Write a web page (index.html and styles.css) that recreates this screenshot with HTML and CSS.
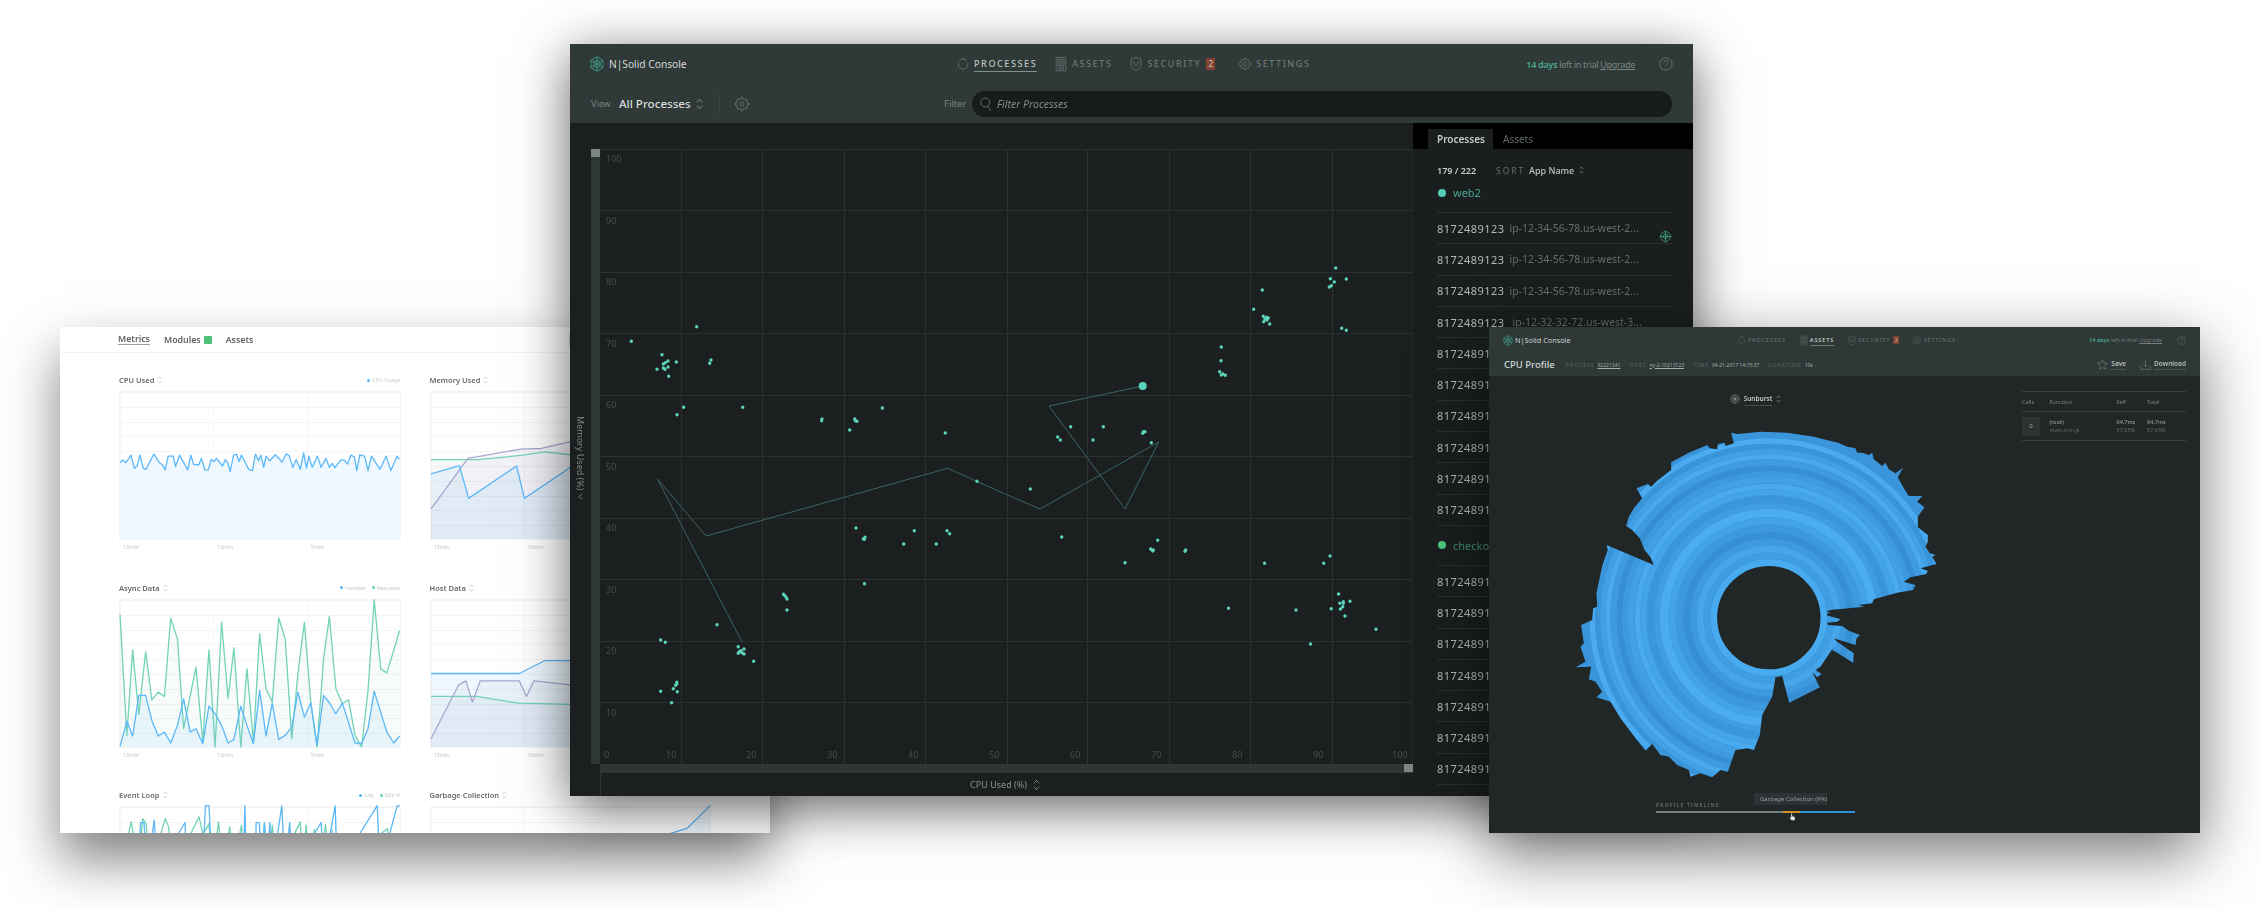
FILE: index.html
```html
<!DOCTYPE html>
<html lang="en">
<head>
<meta charset="utf-8">
<title>N|Solid Console</title>
<link rel="stylesheet" href="styles.css">
</head>
<body>
<svg class="defs" width="0" height="0" aria-hidden="true">
  <symbol id="i-logo" viewBox="0 0 24 28"><path d="M12 1.500 22.500 7.500V20.500L12 26.500 1.500 20.500V7.500ZM12 1.500V26.500M1.500 7.500 22.500 20.500M22.500 7.500 1.500 20.500M12 7.500 17.500 10.700V17.300L12 20.500 6.500 17.300V10.700Z"/></symbol>
  <symbol id="i-proc" viewBox="0 0 16 20"><circle cx="8" cy="10" r="6.500" stroke-dasharray="9 1.500 12 1.500 12 2"/><path d="M8 1v2M8 17v2"/></symbol>
  <symbol id="i-assets" viewBox="0 0 16 20"><rect x="1.500" y="1" width="13" height="18" rx="1"/><rect x="4" y="3.500" width="8" height="8"/><circle cx="8" cy="7.500" r="2"/><path d="M4 14h8M4 16.500h8"/></symbol>
  <symbol id="i-shield" viewBox="0 0 16 20"><path d="M8 1l6.500 2.500v7c0 4-3 6.500-6.500 8.500-3.500-2-6.500-4.500-6.500-8.500v-7z"/><path d="M5 6l1 5 2 2 2-2 1-5"/></symbol>
  <symbol id="i-gear" viewBox="-.5 .4 17 17"><path d="M6.800 1h2.400l.4 2 1.400.6 1.700-1.100 1.700 1.700-1.100 1.700.6 1.400 2 .4v2.400l-2 .4-.6 1.400 1.100 1.700-1.700 1.700-1.700-1.100-1.400.6-.4 2H6.800l-.4-2-1.400-.6-1.700 1.100-1.700-1.700 1.100-1.700-.6-1.400-2-.4V7.700l2-.4.6-1.400-1.100-1.700 1.700-1.700 1.700 1.100 1.400-.6z"/><circle cx="8" cy="8.900" r="2.500"/></symbol>
  <symbol id="i-search" viewBox="0 0 16 20"><circle cx="7" cy="8" r="6"/><path d="M10.500 13l4 6"/></symbol>
  <symbol id="i-updown" viewBox="0 0 8 14"><path d="M1 5l3-3.500L7 5M1 9l3 3.500L7 9"/></symbol>
  <symbol id="i-help" viewBox="0 0 16 16"><circle cx="8" cy="8" r="7"/><path d="M5.800 6.200c0-3 4.400-3 4.400-.2 0 1.800-2.200 1.800-2.200 3.800M8 11.200v1.200"/></symbol>
  <symbol id="i-target" viewBox="0 0 16 16"><circle cx="8" cy="8" r="6"/><circle cx="8" cy="8" r="2.800"/><path d="M8 .5v15M.5 8h15"/></symbol>
  <symbol id="i-star" viewBox="0 0 16 16"><path d="M8 1l2.200 4.700 5.100.6-3.800 3.500 1 5.100L8 12.400l-4.500 2.500 1-5.100L.7 6.300l5.100-.6z"/></symbol>
  <symbol id="i-down" viewBox="0 0 16 16"><path d="M8 1v10M5 8l3 3 3-3M1 10v5h14v-5"/></symbol>
  <symbol id="i-sun" viewBox="0 0 16 16"><circle cx="8" cy="8" r="6.500"/><circle cx="8" cy="8" r="2"/><path d="M8 .5V15.500M.5 8H15.500M3 3l10 10M13 3 3 13"/></symbol>
</svg>

<section class="window light">
  <nav class="light-nav">
    <a class="current">Metrics</a>
    <a>Modules<i class="ok"></i></a>
    <a>Assets</a>
    <span class="light-extra"><i class="light-box"></i>Ne</span>
  </nav>
  <div class="charts">
    <article class="chart">
      <header class="chart-head"><h3>CPU Used<svg class="ud"><use href="#i-updown"/></svg></h3><p class="legend"><i class="c-blue"></i>CPU Usage</p></header>
      <div class="plot"><svg viewBox="230 244 817 445" preserveAspectRatio="none">
        <polygon class="area-blue" points="230,689 230,458 238,450 247,458 262,435 272,475 280,468 288,435 298,475 306,478 329,432 345,458 355,465 362,480 371,438 386,438 392,470 404,435 428,480 437,435 445,463 460,465 468,445 478,480 488,480 497,448 505,455 512,445 530,468 538,448 546,460 552,485 562,435 571,432 578,455 585,435 606,478 617,482 626,432 635,452 642,435 650,472 657,438 668,452 684,434 704,456 716,431 725,438 735,472 745,448 757,478 767,428 775,475 782,438 792,472 807,438 818,472 832,445 842,472 850,460 858,473 875,450 885,450 895,462 905,435 915,440 922,482 931,434 945,438 955,482 965,438 990,478 1008,438 1022,482 1040,438 1047,448 1047,689"/>
        <polyline class="ln-blue" points="230,458 238,450 247,458 262,435 272,475 280,468 288,435 298,475 306,478 329,432 345,458 355,465 362,480 371,438 386,438 392,470 404,435 428,480 437,435 445,463 460,465 468,445 478,480 488,480 497,448 505,455 512,445 530,468 538,448 546,460 552,485 562,435 571,432 578,455 585,435 606,478 617,482 626,432 635,452 642,435 650,472 657,438 668,452 684,434 704,456 716,431 725,438 735,472 745,448 757,478 767,428 775,475 782,438 792,472 807,438 818,472 832,445 842,472 850,460 858,473 875,450 885,450 895,462 905,435 915,440 922,482 931,434 945,438 955,482 965,438 990,478 1008,438 1022,482 1040,438 1047,448"/>
      </svg></div>
      <p class="times"><span>15min</span><span>10min</span><span>5min</span></p>
    </article>
    <article class="chart">
      <header class="chart-head"><h3>Memory Used<svg class="ud"><use href="#i-updown"/></svg></h3></header>
      <div class="plot"><svg viewBox="1132 244 817 445" preserveAspectRatio="none">
        <polygon class="area-gray" points="1132,689 1132,598 1240,445 1395,417 1455,415 1540,394 1949,340 1949,689"/>
        <polygon class="area-gray" points="1132,689 1132,449 1270,449 1395,436 1465,425 1540,434 1949,430 1949,689"/>
        <polygon class="area-soft" points="1132,689 1132,492 1215,467 1242,566 1382,468 1405,566 1540,472 1949,400 1949,689"/>
        <polyline class="ln-green" points="1132,449 1270,449 1395,436 1465,425 1540,434 1949,430"/>
        <polyline class="ln-purple" points="1132,598 1240,445 1395,417 1455,415 1540,394 1949,340"/>
        <polyline class="ln-blue" points="1132,492 1215,467 1242,566 1382,468 1405,566 1540,472 1949,400"/>
      </svg></div>
      <p class="times"><span>15min</span><span>10min</span><span>5min</span></p>
    </article>
    <article class="chart">
      <header class="chart-head"><h3>Async Data<svg class="ud"><use href="#i-updown"/></svg></h3><p class="legend"><i class="c-blue"></i>Handles<i class="c-green"></i>Requests</p></header>
      <div class="plot"><svg viewBox="230 88 817 442" preserveAspectRatio="none">
        <polygon class="area-soft" points="230,530 230,528 250,452 267,497 285,375 305,375 323,450 342,497 360,485 378,518 398,465 416,385 435,485 452,475 472,520 490,407 508,430 527,465 546,518 563,507 583,407 601,465 620,520 638,360 657,497 675,398 694,507 713,495 732,470 750,365 769,440 788,397 806,525 825,375 842,397 861,430 880,398 917,518 936,520 955,475 973,362 992,425 1010,485 1030,518 1047,497 1047,530"/>
        <polygon class="area-faint" points="230,530 230,132 250,495 267,238 285,432 305,243 323,388 342,365 360,378 378,142 398,205 416,475 452,290 472,515 490,238 508,530 527,155 546,385 563,232 583,530 601,295 620,515 638,190 657,355 675,395 694,142 713,205 732,505 750,310 769,155 788,400 806,530 825,265 842,137 861,355 880,400 898,388 917,495 936,530 955,360 973,87 992,295 1010,307 1030,240 1047,180 1047,530"/>
        <polyline class="ln-green" points="230,132 250,495 267,238 285,432 305,243 323,388 342,365 360,378 378,142 398,205 416,475 452,290 472,515 490,238 508,530 527,155 546,385 563,232 583,530 601,295 620,515 638,190 657,355 675,395 694,142 713,205 732,505 750,310 769,155 788,400 806,530 825,265 842,137 861,355 880,400 898,388 917,495 936,530 955,360 973,87 992,295 1010,307 1030,240 1047,180"/>
        <polyline class="ln-blue" points="230,528 250,452 267,497 285,375 305,375 323,450 342,497 360,485 378,518 398,465 416,385 435,485 452,475 472,520 490,407 508,430 527,465 546,518 563,507 583,407 601,465 620,520 638,360 657,497 675,398 694,507 713,495 732,470 750,365 769,440 788,397 806,525 825,375 842,397 861,430 880,398 917,518 936,520 955,475 973,362 992,425 1010,485 1030,518 1047,497"/>
      </svg></div>
      <p class="times"><span>15min</span><span>10min</span><span>5min</span></p>
    </article>
    <article class="chart">
      <header class="chart-head"><h3>Host Data<svg class="ud"><use href="#i-updown"/></svg></h3></header>
      <div class="plot"><svg viewBox="1132 88 817 442" preserveAspectRatio="none">
        <polygon class="area-gray" points="1132,530 1132,505 1213,343 1234,331 1253,395 1276,331 1390,331 1411,378 1433,331 1540,343 1949,370 1949,530"/>
        <polygon class="area-gray" points="1132,530 1132,378 1265,378 1385,398 1540,402 1949,405 1949,530"/>
        <polygon class="area-soft" points="1132,530 1132,309 1390,309 1465,270 1949,270 1949,530"/>
        <polyline class="ln-green" points="1132,378 1265,378 1385,398 1540,402 1949,405"/>
        <polyline class="ln-purple" points="1132,505 1213,343 1234,331 1253,395 1276,331 1390,331 1411,378 1433,331 1540,343 1949,370"/>
        <polyline class="ln-blue" points="1132,309 1390,309 1465,270 1949,270"/>
      </svg></div>
      <p class="times"><span>15min</span><span>10min</span><span>5min</span></p>
    </article>
    <article class="chart">
      <header class="chart-head"><h3>Event Loop<svg class="ud"><use href="#i-updown"/></svg></h3><p class="legend"><i class="c-blue"></i>Lag<i class="c-green"></i>Idle %</p></header>
      <div class="plot"><svg viewBox="230 710 817 445" preserveAspectRatio="none">
        <polyline class="ln-green" points="230,900 263,755 285,900 296,745 306,760 320,900 362,745 372,770 385,900 461,740 472,790 480,780 490,760 500,900 518,755 530,900 551,770 560,900 585,765 595,900 640,900 652,760 665,900 675,765 690,900 757,755 765,900 774,765 785,900 798,778 810,900 831,763 840,900 850,780 860,900 1012,775 1022,900"/>
        <polyline class="ln-blue" points="230,900 285,900 290,757 300,757 310,900 330,750 340,900 420,757 425,900 470,900 480,706 490,706 500,900 590,900 595,706 600,900 625,900 628,757 637,757 645,900 652,757 660,900 668,757 675,900 703,706 712,900 726,757 735,900 818,757 826,900 859,706 865,900 982,706 990,900 1040,707 1047,707"/>
      </svg></div>
    </article>
    <article class="chart">
      <header class="chart-head"><h3>Garbage Collection<svg class="ud"><use href="#i-updown"/></svg></h3></header>
      <div class="plot"><svg viewBox="1132 710 817 445" preserveAspectRatio="none">
        <polygon class="area-soft" points="1132,1155 1132,900 1600,900 1800,800 1880,775 1949,705 1949,1155"/>
        <polyline class="ln-blue" points="1132,900 1600,900 1800,800 1880,775 1949,705"/>
      </svg></div>
    </article>
  </div>
</section>

<section class="window main">
  <header class="bar">
    <div class="bar-top">
      <div class="brand"><svg class="logo"><use href="#i-logo"/></svg>N|Solid Console</div>
      <nav class="nav">
        <a class="nav-item active"><svg><use href="#i-proc"/></svg><span>PROCESSES</span></a>
        <a class="nav-item"><svg><use href="#i-assets"/></svg><span>ASSETS</span></a>
        <a class="nav-item"><svg><use href="#i-shield"/></svg><span>SECURITY</span><em class="badge">2</em></a>
        <a class="nav-item"><svg><use href="#i-gear"/></svg><span>SETTINGS</span></a>
      </nav>
      <p class="trial"><strong>14 days</strong> left in trial <u>Upgrade</u></p>
      <svg class="help"><use href="#i-help"/></svg>
    </div>
    <div class="bar-sub">
      <span class="view-label">View</span>
      <span class="view-value">All Processes</span>
      <svg class="ud ud-lg"><use href="#i-updown"/></svg>
      <i class="divider"></i>
      <svg class="view-gear"><use href="#i-gear"/></svg>
      <span class="filter-label">Filter</span>
      <div class="filter"><svg><use href="#i-search"/></svg><span>Filter Processes</span></div>
    </div>
  </header>
  <div class="main-body">
    <div class="scatter">
      <div class="y-label"><span>Memory Used (%)</span><svg class="chev" viewBox="0 0 8 8"><path d="M6 1 2 4l4 3"/></svg></div>
      <div class="y-scroll"><i class="handle"></i></div>
      <svg class="plot-map" viewBox="600 149 813 615">
        <path class="grid" d="M600 149.500H1413M600 210.500H1413M600 272.500H1413M600 333.500H1413M600 395.500H1413M600 456.500H1413M600 518.500H1413M600 579.500H1413M600 641.500H1413M600 702.500H1413"/>
        <path class="grid" d="M681.500 149V764M762.500 149V764M844.500 149V764M925.500 149V764M1007.500 149V764M1087.500 149V764M1169.500 149V764M1250.500 149V764M1332.500 149V764M1413 149V764"/>
        <g class="tick">
          <text x="606" y="162">100</text><text x="606" y="224">90</text><text x="606" y="285">80</text><text x="606" y="347">70</text><text x="606" y="408">60</text><text x="606" y="470">50</text><text x="606" y="531">40</text><text x="606" y="593">30</text><text x="606" y="654">20</text><text x="606" y="716">10</text>
          <text x="604" y="758">0</text><text x="666" y="758">10</text><text x="746" y="758">20</text><text x="827" y="758">30</text><text x="908" y="758">40</text><text x="989" y="758">50</text><text x="1070" y="758">60</text><text x="1151" y="758">70</text><text x="1232" y="758">80</text><text x="1313" y="758">90</text><text x="1392" y="758">100</text>
        </g>
        <path class="trail" d="M1142.700 386 1049 406 1125 509 1158.700 442 1040 509 1000 491.700 947.700 468.300 706 536 657.700 479.300 742 642"/>
        <path class="dots" d="M631.300 341.300h0M662 354.700h0M668 361h0M665.300 362.700h0M663.300 364h0M676.300 362h0M657 369.300h0M663.300 368h0M665 369.300h0M668 367h0M668.700 376.300h0M696.700 326.700h0M711 360h0M709.700 363.300h0M683.700 407.300h0M677 414.700h0M742.700 407.300h0M822 419h0M821.700 420.700h0M854.700 419h0M855.300 420.700h0M857 421.300h0M849.700 430h0M882.300 408h0M945.300 433h0M977 481.300h0M856 528h0M914.300 530.700h0M865 537.300h0M863.300 539h0M864.300 539.300h0M903.700 544h0M936.300 544h0M947 530.700h0M949.700 533.700h0M1335.700 268h0M1330.300 278.700h0M1334.300 282h0M1346.300 279h0M1331.300 285.700h0M1329.300 287h0M1262.300 290h0M1253.700 309.300h0M1263.300 316.300h0M1266.700 317.300h0M1268.300 318h0M1267 320h0M1265 319h0M1263.700 321.700h0M1269.700 324h0M1341.700 328.300h0M1346.300 330.300h0M1221.300 347h0M1221 360.700h0M1219.700 371.700h0M1221.300 375h0M1222.700 374h0M1225.300 375.300h0M1070.700 426.700h0M1103.300 426.700h0M1057.700 437h0M1060.300 440h0M1093 440h0M1143.300 431.700h0M1145 431.700h0M1142.700 433.300h0M1151.300 442.700h0M1030.300 489h0M1061.700 537h0M1157.700 540.300h0M1150.700 549h0M1152.700 551h0M1153.300 550h0M1185.700 550h0M1185 551.300h0M1330 556h0M864.500 583.700h0M717 624.700h0M784 595h0M787 599h0M783.500 594.300h0M785.800 596.700h0M787 610h0M660.700 640h0M665.300 642.300h0M738.200 646.700h0M744 649h0M739.300 651.700h0M742 652.700h0M741 650.700h0M744 654h0M738.200 653.300h0M753.700 661.300h0M676.800 682.300h0M676.800 684h0M675.600 685.300h0M673.300 688.700h0M660.700 691.300h0M677.300 691.700h0M671.600 702.700h0M1125 562.700h0M1264.600 563.300h0M1323.700 563.300h0M1228.500 608.300h0M1296 610h0M1338.600 594h0M1343.300 601.700h0M1339.800 603.300h0M1343.300 603.300h0M1350 601.300h0M1342.700 606.700h0M1340.400 609h0M1331.200 608.700h0M1345 616h0M1376 629.300h0M1310.500 644h0"/>
        <circle class="big-dot" cx="1142.700" cy="386" r="4"/>
      </svg>
      <div class="x-scroll"><i class="handle"></i></div>
      <div class="x-label">CPU Used (%)<svg class="ud ud-lg"><use href="#i-updown"/></svg></div>
    </div>
    <aside class="side">
      <div class="tabs"><span class="tab on">Processes</span><span class="tab">Assets</span></div>
      <div class="list">
        <p class="summary"><b>179 / 222</b><span class="sort">SORT</span><span class="sort-val">App Name</span><svg class="ud"><use href="#i-updown"/></svg></p>
        <p class="group first"><i class="dot-a"></i><span class="name-a">web2</span></p>
        <p class="row"><b>8172489123</b><span>ip-12-34-56-78.us-west-2...</span><svg class="target"><use href="#i-target"/></svg></p>
        <p class="row"><b>8172489123</b><span>ip-12-34-56-78.us-west-2...</span></p>
        <p class="row"><b>8172489123</b><span>ip-12-34-56-78.us-west-2...</span></p>
        <p class="row"><b>8172489123</b><span class="shift">ip-12-32-32-72.us-west-3...</span></p>
        <p class="row"><b>8172489123</b><span>ip-12-32-32-72.us-west-3...</span></p>
        <p class="row"><b>8172489123</b><span>ip-12-32-32-72.us-west-3...</span></p>
        <p class="row"><b>8172489123</b><span>ip-12-32-32-72.us-west-3...</span></p>
        <p class="row"><b>8172489123</b><span>ip-12-32-32-72.us-west-3...</span></p>
        <p class="row"><b>8172489123</b><span>ip-12-32-32-72.us-west-3...</span></p>
        <p class="row"><b>8172489123</b><span>ip-12-32-32-72.us-west-3...</span></p>
        <p class="group"><i class="dot-b"></i><span class="name-b">checkout</span></p>
        <p class="row"><b>8172489123</b><span>ip-12-34-56-78.us-west-2...</span></p>
        <p class="row"><b>8172489123</b><span>ip-12-34-56-78.us-west-2...</span></p>
        <p class="row"><b>8172489123</b><span>ip-12-34-56-78.us-west-2...</span></p>
        <p class="row"><b>8172489123</b><span>ip-12-34-56-78.us-west-2...</span></p>
        <p class="row"><b>8172489123</b><span>ip-12-34-56-78.us-west-2...</span></p>
        <p class="row"><b>8172489123</b><span>ip-12-34-56-78.us-west-2...</span></p>
        <p class="row"><b>8172489123</b><span>ip-12-34-56-78.us-west-2...</span></p>
      </div>
    </aside>
  </div>
</section>

<section class="window profile">
  <header class="pbar">
    <div class="pbar-top">
      <div class="pbrand"><svg class="plogo"><use href="#i-logo"/></svg>N|Solid Console</div>
      <nav class="pnav">
        <a class="pnav-item"><svg><use href="#i-proc"/></svg><span>PROCESSES</span></a>
        <a class="pnav-item active"><svg><use href="#i-assets"/></svg><span>ASSETS</span></a>
        <a class="pnav-item"><svg><use href="#i-shield"/></svg><span>SECURITY</span><em class="pbadge">2</em></a>
        <a class="pnav-item"><svg><use href="#i-gear"/></svg><span>SETTINGS</span></a>
      </nav>
      <p class="ptrial"><strong>14 days</strong> left in trial <u>Upgrade</u></p>
      <svg class="phelp"><use href="#i-help"/></svg>
    </div>
    <div class="pbar-sub">
      <h2>CPU Profile</h2>
      <dl class="meta">
        <dt>PROCESS</dt><dd><u>92221341</u></dd>
        <dt>HOST</dt><dd><u>ny-2-10213123</u></dd>
        <dt>TIME</dt><dd>04-21-2017 14:15:37</dd>
        <dt>DURATION</dt><dd>10s</dd>
      </dl>
      <a class="action save"><svg><use href="#i-star"/></svg><span>Save</span></a>
      <a class="action"><svg><use href="#i-down"/></svg><span>Download</span></a>
    </div>
  </header>
  <div class="pbody">
    <div class="pmain">
      <div class="select"><svg class="sun-icon"><use href="#i-sun"/></svg><span>Sunburst</span><svg class="ud"><use href="#i-updown"/></svg></div>
      <svg class="sunburst" viewBox="106.500 -30 1200 1080">
        <defs><clipPath id="sun-shape"><path d="M390 352 372 330 358 295 335 270 317 258 325 230 340 205 365 175 348 145 382 132 392 140 410 122 452 90 452 67 505 38 560 15 568 25 590 28 592 12 612 8 615 18 640 10 632 -22 650 -18 720 -25 800 -22 880 -10 952 8 980 20 1005 25 1010 38 1025 38 1045 45 1055 38 1060 58 1085 78 1095 68 1105 88 1125 100 1148 83 1132 112 1150 145 1165 168 1205 168 1190 185 1212 202 1192 230 1192 262 1222 285 1222 305 1215 320 1228 340 1245 345 1235 350 1248 372 1200 385 1222 392 1218 402 1170 412 1150 425 1185 435 1178 450 1130 458 1060 478 1055 490 1015 495 1030 500 930 510 905 518 930 515 915 525 960 538 950 545 920 548 922 555 965 558 985 572 1018 585 1008 595 1005 615 940 595 950 605 1000 640 998 668 945 635 935 630 940 620 920 650 900 680 885 690 903 702 890 712 875 695 898 742 806 788 785 708 765 712 755 770 725 825 718 885 700 930 680 925 645 930 622 995 600 990 575 1012 540 1000 510 1010 505 990 470 975 445 950 420 945 395 912 375 932 345 895 300 835 270 785 228 772 245 755 225 725 205 718 212 680 165 682 195 665 180 620 190 610 182 555 215 540 218 505 230 500 228 460 235 425 246 375 262 330 258 315 400 375Z"/></clipPath></defs>
        <g clip-path="url(#sun-shape)">
          <g class="sun-rings">
            <rect x="100" y="-40" width="1240" height="1100" fill="#3a95da"/>
            <circle cx="745" cy="533" r="530" stroke="#4aabf0" stroke-width="16"/>
            <circle cx="745" cy="533" r="514" stroke="#3a94d8" stroke-width="14"/>
            <circle cx="745" cy="533" r="498" stroke="#41a0e6" stroke-width="14"/>
            <circle cx="745" cy="533" r="483" stroke="#49aaef" stroke-width="14"/>
            <circle cx="745" cy="533" r="466" stroke="#3e9be0" stroke-width="18"/>
            <circle cx="745" cy="533" r="448" stroke="#378ed1" stroke-width="16"/>
            <circle cx="745" cy="533" r="432" stroke="#3d9ae0" stroke-width="14"/>
            <circle cx="745" cy="533" r="414" stroke="#41a0e6" stroke-width="20"/>
            <circle cx="745" cy="533" r="394" stroke="#49aaef" stroke-width="16"/>
            <circle cx="745" cy="533" r="376" stroke="#44a4e9" stroke-width="18"/>
            <circle cx="745" cy="533" r="356" stroke="#3a95da" stroke-width="22"/>
            <circle cx="745" cy="533" r="336" stroke="#3f9ee3" stroke-width="16"/>
            <circle cx="745" cy="533" r="314" stroke="#4bacf2" stroke-width="26"/>
            <circle cx="745" cy="533" r="290" stroke="#43a3e8" stroke-width="20"/>
            <circle cx="745" cy="533" r="268" stroke="#3c99de" stroke-width="22"/>
            <circle cx="745" cy="533" r="246" stroke="#3890d4" stroke-width="20"/>
            <circle cx="745" cy="533" r="226" stroke="#3e9ae0" stroke-width="18"/>
            <circle cx="745" cy="533" r="206" stroke="#46a6eb" stroke-width="20"/>
            <circle cx="745" cy="533" r="186" stroke="#3f9de2" stroke-width="18"/>
          </g>
        </g>
        <circle class="sun-rim" cx="745" cy="533" r="165"/>
      </svg>
      <div class="timeline">
        <p class="tl-label">PROFILE TIMELINE</p>
        <div class="tl-track"><i class="tl-a"></i><i class="tl-b"></i><i class="tl-c"></i></div>
        <div class="tip"><i></i>Garbage Collection (9%)</div>
        <svg class="hand" viewBox="0 0 10 12"><path d="M3 1c1-.6 1.500 0 1.500 1v3l3 .6c1 .3 1.500 1 1.200 2.400L8 11H3.500L1 7.500c-.5-1 .5-1.500 1.300-.8L3 7.500z"/></svg>
      </div>
    </div>
    <aside class="calls">
      <div class="calls-head"><span>Calls</span><span>Function</span><span>Self</span><span>Total</span></div>
      <div class="calls-row">
        <span class="count">0</span>
        <span class="fn">(root)<small>main.min.js</small></span>
        <span class="fn">64.7ms<small>57.65%</small></span>
        <span class="fn">64.7ms<small>57.65%</small></span>
      </div>
    </aside>
  </div>
</section>
</body>
</html>
```

FILE: styles.css
```css
* { box-sizing: border-box; }
html, body { margin: 0; padding: 0; }
body {
  position: relative;
  width: 2260px;
  height: 908px;
  overflow: hidden;
  background: #fff;
  font-family: "Noto Sans", "Open Sans", sans-serif;
}
p, h2, h3, dl, dd, dt { margin: 0; font-weight: inherit; }
i, em { font-style: normal; display: block; }
a { display: block; }
.defs { position: absolute; }
svg { display: block; fill: none; stroke: currentColor; }

.window { position: absolute; filter: blur(.4px); }

/* light metrics window */
.light {
  left: 60px; top: 327px; width: 710px; height: 506px;
  background: #fff; z-index: 1;
  box-shadow: 0 26px 50px rgba(0,0,0,.5);
}
.light-nav {
  height: 26px; display: flex; align-items: center; gap: 14px;
  padding-left: 58px; border-bottom: 1px solid #f3f3f3;
  font-size: 8.800px; color: #5d6362; font-weight: 600;
}
.light-nav .current { border-bottom: 1px solid #9a9e9d; line-height: 10px; }
.light-nav a { display: flex; align-items: center; }
.ok { width: 8px; height: 8px; margin-left: 3px; background: #4cc27a; border-radius: 1px; }
.light-extra { display: flex; align-items: center; gap: 5px; margin-left: 302px; font-weight: 500; }
.light-box { width: 12px; height: 12px; border: 1px solid #d5d7d7; background: #f4f4f4; }
.charts {
  display: grid; grid-template-columns: 281.5px 281.5px; column-gap: 29px;
  grid-auto-rows: 181px; row-gap: 26.5px;
  padding: 20px 0 0 59px; height: 480px; overflow: hidden;
}
.chart-head { display: flex; justify-content: space-between; align-items: center; height: 14px; margin-bottom: 4px; }
.chart-head h3 { display: flex; align-items: center; gap: 3px; font-size: 7.500px; font-weight: 600; color: #666c6b; }
.ud { width: 5px; height: 8px; color: #a8acab; stroke-width: 1; }
.legend { display: flex; align-items: center; font-size: 5.500px; color: #c9cccc; }
.legend i { width: 3px; height: 3px; border-radius: 50%; margin: 0 2px 0 6px; }
.c-blue { background: #4fb3f6; }
.c-green { background: #5cd0b3; }
.plot {
  height: 149px; position: relative; border: 1px solid #f5f5f5;
  background-image:
    repeating-linear-gradient(to bottom, #f3f4f4 0 1px, transparent 1px 14.800px),
    repeating-linear-gradient(to right, #f7f7f7 0 1px, transparent 1px 93.300px);
}
.plot svg { width: 100%; height: 100%; overflow: visible; }
.plot polyline { stroke-width: 1.300; vector-effect: non-scaling-stroke; stroke-linejoin: round; }
.plot polygon { stroke: none; }
.ln-blue { stroke: #5bb8f9; }
.ln-green { stroke: #72d2b8; }
.ln-purple { stroke: #a9a6d0; }
.area-blue { fill: #eff8fe; }
.area-soft { fill: rgba(91,184,249,.1); }
.area-gray { fill: rgba(120,120,170,.05); }
.area-faint { fill: rgba(114,210,184,.06); }
.times { display: grid; grid-template-columns: repeat(3, 93.800px); padding: 3px 0 0 4px; font-size: 5.500px; line-height: 8px; color: #c3c6c6; }

/* main console window */
.main {
  left: 570px; top: 44px; width: 1123px; height: 752px;
  background: #1b1f20; z-index: 2;
  box-shadow: 0 12px 50px rgba(0,0,0,.62);
}
.bar { height: 79px; background: #2f3938; }
.bar-top { height: 40px; display: flex; align-items: center; padding-left: 20px; }
.brand { width: 367px; display: flex; align-items: center; gap: 5px; font-size: 10.200px; color: #d7dada; }
.logo { width: 14px; height: 16px; color: #43a088; stroke-width: 1.500; }
.nav { display: flex; align-items: center; gap: 18px; }
.nav-item { display: flex; align-items: center; gap: 5px; font-size: 9px; letter-spacing: 1.600px; color: #79807f; }
.nav-item svg { width: 12px; height: 16px; color: #727a79; stroke-width: 1; }
.nav-item span { line-height: 14px; border-bottom: 1px solid transparent; }
.nav-item.active span { color: #bfc4c3; border-bottom-color: #80908d; font-weight: 500; }
.nav-item:nth-child(4) { margin-left: 6px; }
.badge { background: #7f4431; color: #d9c3b8; font-size: 8px; width: 9px; height: 12px; line-height: 12px; text-align: center; letter-spacing: 0; }
.trial { margin-left: auto; font-size: 9px; letter-spacing: -.3px; color: #7d8483; }
.trial strong { color: #4cab8f; font-weight: 600; }
.help { width: 14px; height: 14px; margin: 0 20px 0 24px; color: #6f7776; stroke-width: 1; }
.bar-sub { height: 39px; display: flex; align-items: center; padding-left: 21px; }
.view-label { font-size: 9px; color: #7c8382; width: 28px; }
.view-value { font-size: 11.600px; font-weight: 500; color: #d9dcdb; width: 74px; white-space: nowrap; }
.ud-lg { width: 7px; height: 12px; margin-left: 3px; color: #8c9291; }
.divider { width: 1px; height: 22px; background: #394342; margin-left: 16px; }
.view-gear { width: 14px; height: 16px; margin-left: 15px; color: #737b7a; stroke-width: 1; }
.filter-label { font-size: 9.500px; color: #7c8382; margin-left: 195px; width: 28px; }
.filter {
  width: 700px; height: 26px; border-radius: 13px; background: #171b1b;
  display: flex; align-items: center; gap: 5px; padding-left: 8px;
  font-style: italic; font-size: 10.500px; color: #858b8a;
}
.filter svg { width: 12px; height: 16px; color: #7d8483; stroke-width: 1; }
.main-body { display: flex; height: 673px; }
.scatter {
  width: 843px; flex: none; display: grid;
  grid-template-columns: 21px 9px 813px;
  grid-template-rows: 26px 615px 9px 23px;
}
.y-label {
  grid-column: 1; grid-row: 2 / 4;
  display: flex; flex-direction: column; align-items: center; justify-content: center; gap: 3px;
  padding-bottom: 6px;
  font-size: 9px; color: #7d8483;
}
.y-label span { writing-mode: vertical-rl; }
.chev { width: 7px; height: 7px; color: #7d8483; stroke-width: 1; }
.y-scroll { grid-column: 2; grid-row: 2; background: #2d3736; }
.x-scroll { grid-column: 3; grid-row: 3; background: #2d3736; display: flex; justify-content: flex-end; }
.handle { width: 9px; height: 8px; background: #7e8685; }
.plot-map { grid-column: 3; grid-row: 2; width: 813px; height: 615px; }
.grid { stroke: #2a3130; stroke-width: 1; }
.tick text { font-size: 9px; fill: #464e4d; stroke: none; }
.trail { stroke: #3b6660; stroke-width: 1; stroke-linejoin: round; }
.dots { stroke: #5cd4bc; stroke-width: 3.400; stroke-linecap: round; }
.big-dot { fill: #5cd4bc; stroke: none; }
.x-label {
  grid-column: 3; grid-row: 4; display: flex; align-items: center; justify-content: center; gap: 3px;
  font-size: 9px; color: #8a908f; border-left: 1px solid #2a3130; padding-right: 4px;
}
.side { flex: 1; background: #1a1e1f; overflow: hidden; }
.tabs { height: 26px; background: #000; display: flex; align-items: flex-end; padding-left: 15px; gap: 1px; }
.tab { height: 20px; line-height: 20px; padding: 0 9px; font-size: 10px; color: #62696a; }
.tab.on { background: #1a1e1f; color: #c8cccb; font-weight: 600; width: 65px; }
.list { padding: 14px 21px 0 24px; }
.summary { display: flex; align-items: center; height: 14px; font-size: 9px; color: #c8cccb; }
.summary b { width: 59px; font-weight: 600; }
.sort { width: 33px; letter-spacing: 2px; font-size: 8.500px; color: #666d6c; }
.sort-val { color: #bfc4c3; font-weight: 500; margin-right: 5px; }
.group {
  display: flex; align-items: center; height: 40px; gap: 7px; font-size: 11px;
  border-bottom: 1px solid #2a3130;
}
.group.first { height: 36px; padding-bottom: 4px; }
.group i { width: 8px; height: 8px; border-radius: 50%; margin-left: 1px; }
.dot-a { background: #53cfb5; }
.dot-b { background: #4ec87f; }
.name-a { color: #48a88f; }
.name-b { color: #3f8f6f; }
.row {
  height: 31.300px; display: flex; align-items: center; gap: 5px; position: relative;
  border-bottom: 1px solid #2a3130; font-size: 11px; white-space: nowrap;
}
.row b { font-weight: 400; letter-spacing: .45px; color: #b5b9b8; }
.row span { font-size: 10.500px; color: #666d6c; }
.row .shift { margin-left: 3px; }
.target { position: absolute; right: 0; top: 17px; width: 13px; height: 13px; color: #3f9c80; stroke-width: 1; }

/* CPU profile window */
.profile {
  left: 1489px; top: 327px; width: 711px; height: 506px;
  background: #212627; z-index: 3; filter: blur(.3px);
  box-shadow: 0 20px 60px rgba(0,0,0,.55);
}
.pbar { height: 49px; background: #2e3837; }
.pbar-top { height: 26px; display: flex; align-items: center; padding-left: 14px; }
.pbrand { width: 235px; display: flex; align-items: center; gap: 2px; font-size: 7.300px; color: #cfd3d2; }
.plogo { width: 10px; height: 11px; color: #43a088; stroke-width: 1.500; }
.pnav { display: flex; align-items: center; gap: 14px; }
.pnav-item { display: flex; align-items: center; gap: 2px; font-size: 5.500px; letter-spacing: .9px; color: #6d7473; }
.pnav-item svg { width: 8px; height: 11px; color: #646c6b; stroke-width: 1; }
.pnav-item span { line-height: 10px; border-bottom: 1px solid transparent; }
.pnav-item.active span { color: #c6cac9; font-weight: 600; border-bottom-color: #6f7b79; }
.pbadge { background: #7f4431; color: #d9c3b8; font-size: 5.500px; width: 6px; height: 8px; line-height: 8px; margin-left: 1px; text-align: center; letter-spacing: 0; }
.ptrial { margin-left: auto; font-size: 5.600px; color: #757c7b; }
.ptrial strong { color: #4cab8f; font-weight: 600; }
.phelp { width: 9px; height: 9px; margin: 0 14px 0 15px; color: #646c6b; stroke-width: 1; }
.pbar-sub { height: 23px; display: flex; align-items: center; padding-left: 15px; }
.pbar-sub h2 { font-size: 9.500px; font-weight: 500; color: #d5d8d7; width: 56px; white-space: nowrap; }
.meta { display: flex; align-items: center; font-size: 5px; color: #a5aaa9; gap: 3px; white-space: nowrap; }
.meta dt { letter-spacing: 1px; color: #5e6564; margin-left: 6px; }
.action { display: flex; align-items: center; gap: 3px; font-size: 6.500px; font-weight: 600; color: #b9bdbc; margin-right: 14px; }
.action.save { margin-left: auto; }
.action svg { width: 11px; height: 11px; color: #727a79; stroke-width: 1; }
.action span { border-bottom: 1px solid #4b5453; line-height: 10px; }
.pbody { display: flex; height: 457px; }
.pmain { width: 533px; display: flex; flex-direction: column; align-items: center; padding-top: 16px; }
.select { height: 14px; display: flex; align-items: center; gap: 4px; font-size: 6.500px; font-weight: 600; color: #c4c8c7; }
.select span { border-bottom: 1px solid #454e4d; line-height: 12px; }
.sun-icon { width: 10px; height: 12px; color: #818786; stroke-width: 1; }
.sunburst { width: 400px; height: 360px; margin-top: 24px; flex: none; overflow: visible; }
.sun-rings { filter: blur(1.500px); }
.sun-rings circle { fill: none; }
.sun-rim { fill: #212627; stroke: #48aaef; stroke-width: 20; }
.timeline { width: 199px; margin-top: 11px; position: relative; }
.tl-label { font-size: 5px; letter-spacing: 1.250px; line-height: 8px; color: #7c8382; }
.tl-track { display: flex; height: 2px; margin-top: 2px; }
.tl-a { width: 127px; background: #76807e; }
.tl-b { width: 17px; background: #d68f22; }
.tl-c { flex: 1; background: #2f92d8; }
.tip {
  position: absolute; left: 98px; top: -8px; width: 73px; height: 12px;
  display: flex; align-items: center; gap: 3px; padding-left: 3px;
  background: #2d3334; font-size: 6px; color: #9a9f9e; white-space: nowrap;
}
.tip i { width: 3px; height: 3px; border-radius: 50%; background: #e39a22; }
.hand { position: absolute; left: 133px; top: 12px; width: 7px; height: 8px; }
.hand path { fill: #e6e6e6; stroke: none; }
.calls { width: 163.500px; margin-top: 15px; font-size: 5.500px; color: #7c8382; }
.calls-head, .calls-row { display: grid; grid-template-columns: 27.500px 67px 30.500px 1fr; align-items: center; border-top: 1px solid #39403f; }
.calls-head { height: 20px; }
.calls-row { height: 30px; border-bottom: 1px solid #39403f; }
.count { width: 18px; height: 19px; line-height: 19px; text-align: center; background: #2c3332; color: #b5b9b8; }
.fn { display: flex; flex-direction: column; line-height: 8px; color: #a3a8a7; }
.fn small { font-size: 5.500px; color: #666d6c; }
```
